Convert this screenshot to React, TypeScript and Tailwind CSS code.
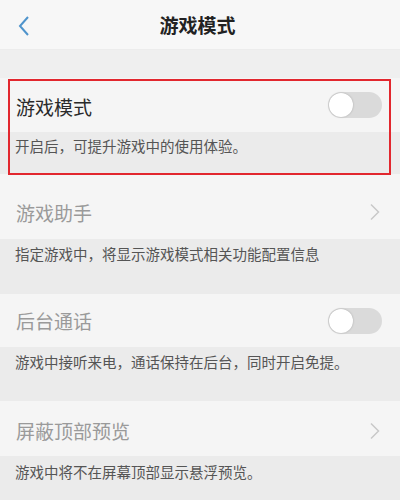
import React from "react";

const font = { fontFamily: '"Noto Sans CJK SC", "Noto Sans", sans-serif' };

function Toggle() {
  return (
    <div className="w-[54px] h-[26px] rounded-full bg-[#dadada] flex items-center px-[1px]">
      <div className="w-[24px] h-[24px] rounded-full bg-white shadow-[0_0_2px_rgba(0,0,0,0.25)]" />
    </div>
  );
}

function Chevron() {
  return (
    <svg width="12" height="18" viewBox="0 0 12 18" className="mr-[1px]">
      <path d="M2 1.5 L9.5 9 L2 16.5" fill="none" stroke="#c9c9c9" strokeWidth="1.5" />
    </svg>
  );
}

export default function App() {
  return (
    <div className="w-[400px] h-[500px] overflow-hidden bg-[#f5f5f5] relative" style={font}>
      {/* header */}
      <div className="h-[50px] bg-[#f7f7f7] border-b border-[#ececec] flex items-center relative">
        <svg width="16" height="22" viewBox="0 0 16 22" className="absolute left-[16px] top-[15px]">
          <path d="M12 2 L4 11 L12 20" fill="none" stroke="#4f94cc" strokeWidth="2" />
        </svg>
        <div className="flex-1 text-center text-[19px] font-semibold text-[#222] leading-none pr-[5px]">游戏模式</div>
      </div>
      <div className="h-[28px] bg-[#efefef]" />

      {/* item 1 */}
      <div className="h-[54px] bg-[#f5f5f5] flex items-center justify-between pl-[16px] pr-[18px]">
        <span className="text-[19px] text-[#2a2a2a] leading-none mt-[3px]">游戏模式</span>
        <Toggle />
      </div>
      <div className="h-[42px] bg-[#ebebeb] pl-[15px] pt-[5px] text-[14.5px] text-[#555] leading-[18px]">
        开启后，可提升游戏中的使用体验。
      </div>

      {/* item 2 */}
      <div className="h-[65px] bg-[#f5f5f5] flex items-center justify-between pl-[16px] pr-[18px] pt-[11px]">
        <span className="text-[19px] text-[#9a9a9a] leading-none">游戏助手</span>
        <Chevron />
      </div>
      <div className="h-[55px] bg-[#ebebeb] pl-[15px] pt-[6px] text-[14.5px] text-[#555] leading-[18px]">
        指定游戏中，将显示游戏模式相关功能配置信息
      </div>

      {/* item 3 */}
      <div className="h-[53px] bg-[#f5f5f5] flex items-center justify-between pl-[16px] pr-[18px]">
        <span className="text-[19px] text-[#9a9a9a] leading-none">后台通话</span>
        <Toggle />
      </div>
      <div className="h-[54px] bg-[#ebebeb] pl-[15px] pt-[6px] text-[14.5px] text-[#555] leading-[18px]">
        游戏中接听来电，通话保持在后台，同时开启免提。
      </div>

      {/* item 4 */}
      <div className="h-[55px] bg-[#f5f5f5] flex items-center justify-between pl-[16px] pr-[18px] pt-[4px]">
        <span className="text-[19px] text-[#9a9a9a] leading-none">屏蔽顶部预览</span>
        <Chevron />
      </div>
      <div className="h-[60px] bg-[#ebebeb] pl-[15px] pt-[7px] text-[14.5px] text-[#555] leading-[18px]">
        游戏中将不在屏幕顶部显示悬浮预览。
      </div>

      {/* red annotation box */}
      <div className="absolute left-[8px] top-[79px] w-[383px] h-[96px] border-2 border-[#e2272e] pointer-events-none" />
    </div>
  );
}
